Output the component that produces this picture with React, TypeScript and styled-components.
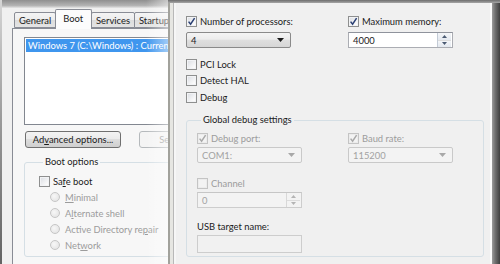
import React from "react";
import styled, { createGlobalStyle } from "styled-components";

const FONT = `Lato, "Noto Sans", "Liberation Sans", sans-serif`;

const Global = createGlobalStyle`
  html, body { margin: 0; padding: 0; }
  body { background: #4a4a4a; font-family: ${FONT}; }
`;

const Desktop = styled.div`
  position: relative;
  width: 500px;
  height: 264px;
  overflow: hidden;
  background: #4a4a4a;
  font-family: ${FONT};
  font-size: 9.4px;
  color: #1b1b1b;
`;

/* ---------- background window (System Configuration) ---------- */

const BackWindow = styled.div`
  position: absolute;
  z-index: 1;
  left: 0;
  top: 0;
  width: 176px;
  height: 300px;
  overflow: hidden;
  display: flex;
  flex-direction: column;
  background: #f0f0f0;
  border-left: 2px solid #8a8a8a;
  border-image: linear-gradient(#d6d6d6, #9a9a9a 40%, #555 100%) 1;
`;

const BackTopEdge = styled.div`
  flex: none;
  height: 8px;
  background: linear-gradient(#8f8f8f, #b4b4b4 70%, #e6e6e6);
`;

const BackBody = styled.div`
  flex: none;
  width: 240px;
  display: flex;
  flex-direction: column;
  padding-left: 10px;
`;

const TabStrip = styled.div`
  flex: none;
  display: flex;
  align-items: flex-end;
  height: 19px;
  margin-top: 1px;
  padding-left: 3px;
`;

const Tab = styled.div<{ $active?: boolean }>`
  position: relative;
  z-index: ${(p) => (p.$active ? 2 : 1)};
  box-sizing: border-box;
  height: ${(p) => (p.$active ? "20px" : "16px")};
  margin-bottom: ${(p) => (p.$active ? "-1px" : "0")};
  margin-left: -1px;
  padding: ${(p) => (p.$active ? "2px 8px 0 7px" : "1px 4px 0")};
  border: 1px solid #898c95;
  border-bottom: ${(p) => (p.$active ? "none" : "1px solid #898c95")};
  border-radius: 2px 2px 0 0;
  background: ${(p) =>
    p.$active
      ? "#fcfcfc"
      : "linear-gradient(#f4f4f4, #ececec 50%, #dcdcdc 50%, #e4e4e4)"};
  white-space: nowrap;
  line-height: 13px;
`;

const TabPanel = styled.div`
  flex: none;
  display: flex;
  flex-direction: column;
  border: 1px solid #898c95;
  background: #f7f7f7;
  padding: 8px 0 0 11px;
  height: 260px;
`;

const ListBox = styled.div`
  flex: none;
  width: 160px;
  height: 88px;
  box-sizing: border-box;
  border: 1px solid #828790;
  background: #ffffff;
  padding: 1px;
  overflow: hidden;
`;

const ListItem = styled.div<{ $selected?: boolean }>`
  height: 13px;
  line-height: 13px;
  padding-left: 2px;
  white-space: nowrap;
  overflow: hidden;
  background: ${(p) => (p.$selected ? "#3f96ee" : "transparent")};
  color: ${(p) => (p.$selected ? "#ffffff" : "#1b1b1b")};
`;

const ButtonRow = styled.div`
  flex: none;
  display: flex;
  gap: 18px;
  margin-top: 6px;
  padding-left: 1px;
`;

const Button = styled.div<{ $disabled?: boolean }>`
  box-sizing: border-box;
  width: 96px;
  height: 17px;
  display: flex;
  align-items: center;
  justify-content: center;
  border: 1px solid ${(p) => (p.$disabled ? "#b5b9bc" : "#707070")};
  border-radius: 3px;
  background: ${(p) =>
    p.$disabled
      ? "#f4f4f4"
      : "linear-gradient(#f3f3f3, #ebebeb 45%, #dddddd 50%, #cfcfcf)"};
  color: ${(p) => (p.$disabled ? "#9a9a9a" : "#1b1b1b")};
  white-space: nowrap;
  flex: none;
`;

const GroupBox = styled.fieldset<{ $pad: string; $ml?: string; $mr?: string; $mt: string; $w?: string }>`
  flex: none;
  width: ${(p) => p.$w || "auto"};
  margin: ${(p) => `${p.$mt} ${p.$mr || "0"} 0 ${p.$ml || "0"}`};
  padding: ${(p) => p.$pad};
  border: 1px solid #d5dfe5;
  border-radius: 3px;
  min-width: 0;
`;

const Legend = styled.legend`
  margin-left: 4px;
  padding: 0 2px;
  line-height: 12px;
  color: #1b1b1b;
`;

const OptionList = styled.div<{ $gap?: string; $mt?: string; $ml?: string }>`
  display: flex;
  flex-direction: column;
  gap: ${(p) => p.$gap || "0"};
  margin-top: ${(p) => p.$mt || "0"};
  margin-left: ${(p) => p.$ml || "0"};
`;

const Row = styled.div<{ $h?: string; $disabled?: boolean }>`
  display: flex;
  align-items: center;
  gap: 3px;
  height: ${(p) => p.$h || "12px"};
  white-space: nowrap;
  color: ${(p) => (p.$disabled ? "#9c9c9c" : "#1b1b1b")};
`;

const Box = styled.span<{ $disabled?: boolean }>`
  box-sizing: border-box;
  width: 11px;
  height: 11px;
  flex: none;
  display: flex;
  align-items: center;
  justify-content: center;
  border: 1px solid ${(p) => (p.$disabled ? "#c4c4c4" : "#8e8f8f")};
  background: ${(p) =>
    p.$disabled ? "#f3f3f3" : "linear-gradient(135deg, #d9dce2, #fbfbfb 80%)"};
  box-shadow: inset 0 0 0 1px ${(p) => (p.$disabled ? "#ececec" : "#f2f3f5")};
`;

const Radio = styled.span`
  box-sizing: border-box;
  width: 10px;
  height: 10px;
  flex: none;
  border-radius: 50%;
  border: 1px solid #c6c6c6;
  background: radial-gradient(circle at 40% 40%, #f7f7f7, #e0e0e0);
  margin-right: 2px;
`;

const U = styled.span`
  text-decoration: underline;
  text-underline-offset: 1px;
`;

function Check({
  checked,
  disabled,
  children,
}: {
  checked?: boolean;
  disabled?: boolean;
  children: React.ReactNode;
}) {
  return (
    <Row $disabled={disabled}>
      <Box $disabled={disabled}>
        {checked && (
          <svg width="9" height="9" viewBox="0 0 9 9">
            <path
              d="M1.6 4.6 L3.6 7.2 L7.6 1.2"
              fill="none"
              stroke={disabled ? "#a9a9a9" : "#2a3f73"}
              strokeWidth="1.5"
            />
          </svg>
        )}
      </Box>
      <span>{children}</span>
    </Row>
  );
}

/* ---------- front dialog (Boot Advanced Options) ---------- */

const FrontWindow = styled.div`
  position: absolute;
  z-index: 5;
  left: 168px;
  top: 0;
  right: 0;
  height: 290px;
  display: flex;
  flex-direction: column;
  &::before {
    content: "";
    position: absolute;
    left: -22px;
    top: 0;
    width: 22px;
    height: 100%;
    background: linear-gradient(to right, rgba(255, 255, 255, 0), rgba(255, 255, 255, 0.5));
    pointer-events: none;
  }
`;

const FrontTopEdge = styled.div`
  flex: none;
  height: 3px;
  background: linear-gradient(#6d6d6d, #a6a6a6);
`;

const FrameRow = styled.div`
  flex: 1;
  display: flex;
`;

const LeftEdge = styled.div`
  width: 8px;
  flex: none;
  background: linear-gradient(
    to right,
    #a2a29c 0 2px,
    #e6e6e2 2px 5px,
    #b8b8b8 5px 6px,
    #f6f6f6 6px
  );
`;

const RightEdge = styled.div`
  width: 10px;
  flex: none;
  background: linear-gradient(
    to right,
    #fbfbfb 0 2px,
    #9c9c9c 2px,
    #727272 5px,
    #3f3f3f 10px
  );
`;

const Client = styled.div`
  flex: 1;
  display: flex;
  flex-direction: column;
  background: #f0f0f0;
  padding: 12px 0 0 10px;
  min-width: 0;
`;

const TwoCols = styled.div<{ $col: string }>`
  display: grid;
  grid-template-columns: ${(p) => p.$col} 1fr;
`;

const Col = styled.div<{ $gap?: string }>`
  display: flex;
  flex-direction: column;
  gap: ${(p) => p.$gap || "0"};
`;

const Select = styled.div<{ $disabled?: boolean }>`
  box-sizing: border-box;
  width: 105px;
  height: 16px;
  display: flex;
  align-items: center;
  justify-content: space-between;
  padding: 0 6px 0 4px;
  border: 1px solid ${(p) => (p.$disabled ? "#c9c9c9" : "#8a8a8a")};
  border-radius: 2px;
  background: ${(p) =>
    p.$disabled
      ? "#f3f3f3"
      : "linear-gradient(#f4f4f4, #ececec 45%, #dfdfdf 50%, #d6d6d6)"};
  color: ${(p) => (p.$disabled ? "#a2a2a2" : "#1b1b1b")};
`;

const Spin = styled.div<{ $disabled?: boolean }>`
  box-sizing: border-box;
  width: 105px;
  height: 16px;
  display: flex;
  align-items: stretch;
  border: 1px solid ${(p) => (p.$disabled ? "#cdcdcd" : "#abadb3")};
  border-top-color: ${(p) => (p.$disabled ? "#c6c6c6" : "#8f939c")};
  background: ${(p) => (p.$disabled ? "#f3f3f3" : "#ffffff")};
  color: ${(p) => (p.$disabled ? "#a2a2a2" : "#1b1b1b")};
`;

const SpinValue = styled.div`
  flex: 1;
  display: flex;
  align-items: center;
  padding-left: 4px;
`;

const SpinButtons = styled.div<{ $disabled?: boolean }>`
  width: 13px;
  display: flex;
  flex-direction: column;
  margin: 0 1px 0 0;
  border-left: 1px solid ${(p) => (p.$disabled ? "#d8d8d8" : "#c3cbd6")};
`;

const SpinHalf = styled.div<{ $disabled?: boolean }>`
  flex: 1;
  display: flex;
  align-items: center;
  justify-content: center;
  background: ${(p) => (p.$disabled ? "#f3f3f3" : "linear-gradient(#f4f6f9, #e3e8ef)")};
  & + & {
    border-top: 1px solid ${(p) => (p.$disabled ? "#dcdcdc" : "#cdd3dc")};
  }
`;

const TextField = styled.div`
  box-sizing: border-box;
  width: 105px;
  height: 18px;
  margin-top: 2px;
  border: 1px solid #cdcdcd;
  background: #f1f1f1;
`;

const Label = styled.div<{ $mt?: string }>`
  height: 12px;
  line-height: 12px;
  margin-top: ${(p) => p.$mt || "0"};
  color: #1b1b1b;
`;

const Gap = styled.div<{ $h: string }>`
  height: ${(p) => p.$h};
`;

function Arrow({ color }: { color: string }) {
  return (
    <svg width="7" height="4" viewBox="0 0 7 4">
      <path d="M0 0 H7 L3.5 4 Z" fill={color} />
    </svg>
  );
}

function SpinBox({ value, disabled }: { value: string; disabled?: boolean }) {
  const c = disabled ? "#b4b4b4" : "#4a5a72";
  return (
    <Spin $disabled={disabled}>
      <SpinValue>{value}</SpinValue>
      <SpinButtons $disabled={disabled}>
        <SpinHalf $disabled={disabled}>
          <svg width="5" height="3" viewBox="0 0 5 3">
            <path d="M0 3 H5 L2.5 0 Z" fill={c} />
          </svg>
        </SpinHalf>
        <SpinHalf $disabled={disabled}>
          <svg width="5" height="3" viewBox="0 0 5 3">
            <path d="M0 0 H5 L2.5 3 Z" fill={c} />
          </svg>
        </SpinHalf>
      </SpinButtons>
    </Spin>
  );
}

export default function App() {
  return (
    <Desktop>
      <Global />
      <BackWindow>
        <BackTopEdge />
        <BackBody>
          <TabStrip>
            <Tab>General</Tab>
            <Tab $active>Boot</Tab>
            <Tab>Services</Tab>
            <Tab>Startup</Tab>
          </TabStrip>
          <TabPanel>
            <ListBox>
              <ListItem $selected>{"Windows 7 (C:\\Windows) : Current OS; Default OS"}</ListItem>
            </ListBox>
            <ButtonRow>
              <Button>
                <span>
                  Ad<U>v</U>anced options...
                </span>
              </Button>
              <Button $disabled>Set as default</Button>
            </ButtonRow>
            <GroupBox $mt="8px" $pad="7px 0 3px 14px" $w="230px">
              <Legend>Boot options</Legend>
              <Check>
                Sa<U>f</U>e boot
              </Check>
              <OptionList $mt="2px" $ml="11px">
                <Row $h="16px" $disabled>
                  <Radio />
                  <span>
                    <U>M</U>inimal
                  </span>
                </Row>
                <Row $h="16px" $disabled>
                  <Radio />
                  <span>
                    A<U>l</U>ternate shell
                  </span>
                </Row>
                <Row $h="16px" $disabled>
                  <Radio />
                  <span>
                    Active Directory re<U>p</U>air
                  </span>
                </Row>
                <Row $h="16px" $disabled>
                  <Radio />
                  <span>
                    Net<U>w</U>ork
                  </span>
                </Row>
              </OptionList>
            </GroupBox>
          </TabPanel>
        </BackBody>
      </BackWindow>

      <FrontWindow>
        <FrontTopEdge />
        <FrameRow>
          <LeftEdge />
          <Client>
            <TwoCols $col="162px">
              <Col $gap="5px">
                <Check checked>Number of processors:</Check>
                <Select>
                  <span>4</span>
                  <Arrow color="#1b1b1b" />
                </Select>
              </Col>
              <Col $gap="5px">
                <Check checked>Maximum memory:</Check>
                <SpinBox value="4000" />
              </Col>
            </TwoCols>
            <OptionList $mt="10px" $gap="4.5px">
              <Check>PCI Lock</Check>
              <Check>Detect HAL</Check>
              <Check>Debug</Check>
            </OptionList>
            <GroupBox $mt="11px" $mr="6px" $pad="6px 0 3px 10px">
              <Legend>Global debug settings</Legend>
              <TwoCols $col="151px">
                <Col $gap="3px">
                  <Check checked disabled>
                    Debug port:
                  </Check>
                  <Select $disabled>
                    <span>COM1:</span>
                    <Arrow color="#a8a8a8" />
                  </Select>
                </Col>
                <Col $gap="3px">
                  <Check checked disabled>
                    Baud rate:
                  </Check>
                  <Select $disabled>
                    <span>115200</span>
                    <Arrow color="#a8a8a8" />
                  </Select>
                </Col>
              </TwoCols>
              <Gap $h="14px" />
              <Col $gap="3px">
                <Check disabled>Channel</Check>
                <SpinBox value="0" disabled />
              </Col>
              <Label $mt="13px">USB target name:</Label>
              <TextField />
            </GroupBox>
          </Client>
          <RightEdge />
        </FrameRow>
      </FrontWindow>
    </Desktop>
  );
}
